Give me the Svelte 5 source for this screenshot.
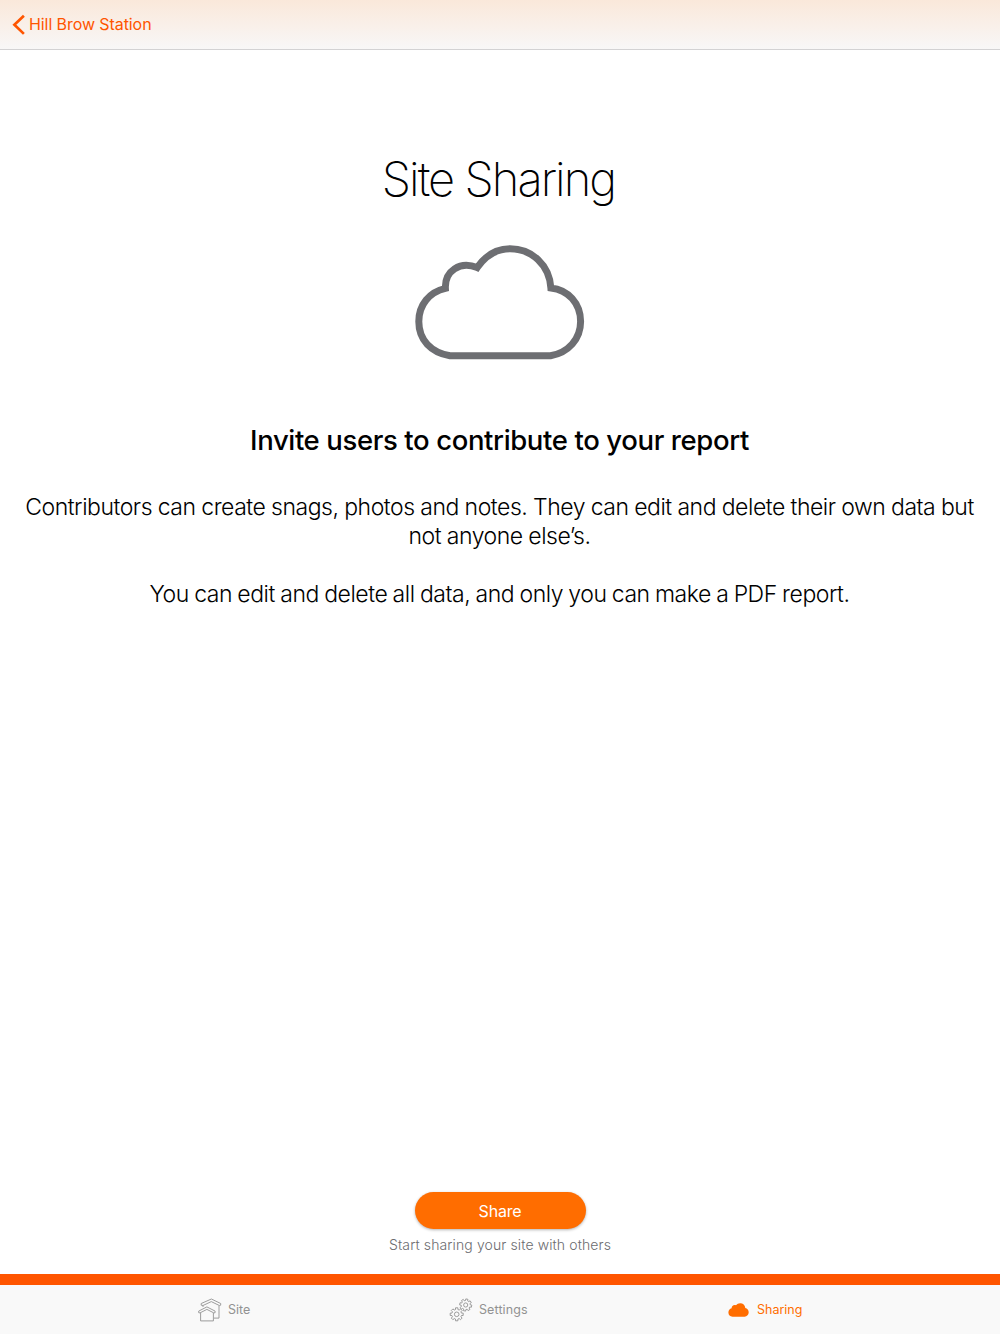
<script>
  const copy = [
    ['Contributors can create snags, photos and notes. They can edit and delete their own data but', 'not anyone else’s.'],
    ['You can edit and delete all data, and only you can make a PDF report.']
  ]

  // outline of a gear with eight square teeth
  function gear(cx, cy, outer, inner, turn = 0) {
    const points = []
    for (let i = 0; i < 8; i++) {
      const a = i * Math.PI / 4 + turn
      for (const [r, offset] of [[inner, -0.25], [outer, -0.18], [outer, 0.18], [inner, 0.25]]) {
        points.push(`${(cx + r * Math.cos(a + offset)).toFixed(2)} ${(cy + r * Math.sin(a + offset)).toFixed(2)}`)
      }
    }
    return `M${points.join('L')}Z`
  }
</script>


<div class="screen">
  <header>
    <button class="back">
      <svg width="14" height="22" viewBox="0 0 14 22"><path d="M12.900 1.800 3.400 10.800l9.500 9.100" /></svg>
      <span>Hill Brow Station</span>
    </button>
  </header>

  <main>
    <h1>Site Sharing</h1>

    <svg class="cloud" width="200" height="140" viewBox="0 0 200 140">
      <path d="M50 125.8C31 122.5 18.8 110 18.8 91.5C18.8 74.5 29.5 62 45.4 58.3C44.6 41 60 30.5 77.2 37.600C85.500 25.500 96 18.800 110 18.800C132 18.800 149.300 35 150.900 57.900C168 59.500 180.600 73.500 180.600 91.500C180.600 109 168.500 122.500 150.500 125.800Z" />
    </svg>

    <h2>Invite users to contribute to your report</h2>

    <div class="copy">
      {#each copy as lines}
        <p>
          {#each lines as line}<span>{line}</span>{/each}
        </p>
      {/each}
    </div>
  </main>

  <section class="action">
    <button class="share"><span>Share</span></button>
    <small>Start sharing your site with others</small>
  </section>

  <nav>
    <button class="site">
      <svg width="24" height="26" viewBox="0 0 24 26">
        <path d="M5 10V8.600M3.200 8.200V6.500L13.400 2l9.300 4.500v1.700l-1.400.3-8-3.900-8.300 3.900-1.800-.3M21 8.700v12.400h-5" />
        <path d="M.7 15.700v-1.600l8.200-4.200 8.200 4.200v1.600l-1.300.2-6.900-3.500L2 15.900zM2.600 16v7.900h12.800V16" />
      </svg>
      <span>Site</span>
    </button>
    <button class="settings">
      <svg width="24" height="26" viewBox="0 0 24 26">
        <path d={gear(7.7, 17.3, 6.6, 4.9)} />
        <circle cx="7.7" cy="17.3" r="2.3" />
        <path d={gear(16.7, 8, 6.1, 4.5, 0.2)} />
        <circle cx="16.7" cy="8" r="2.1" />
      </svg>
      <span>Settings</span>
    </button>
    <button class="sharing">
      <svg width="21" height="14" viewBox="0 0 21 14">
        <path d="M4.500 13.700C2 13.500.4 12 .4 9.500c0-2.100 1.300-3.700 3.200-4.200C3.600 2.800 5.600 1.400 8 2.200 9 .9 10.400.2 12.200.2c2.800 0 4.800 1.900 5.100 4.800 2 .5 3.400 2.200 3.400 4.300 0 2.500-1.700 4.200-4.100 4.400z" />
      </svg>
      <span>Sharing</span>
    </button>
  </nav>
</div>


<style>

  :global(body) {
    margin: 0;
  }

  .screen {
    display: flex;
    flex-direction: column;
    height: 1334px;
    overflow: hidden;
    background: #fff;
    color: #000;
    font-family: Inter, "Liberation Sans", sans-serif;
  }

  button {
    display: flex;
    align-items: center;
    margin: 0;
    padding: 0;
    border: 0;
    background: none;
    color: inherit;
    font: inherit;
  }

  svg {
    display: block;
    flex: none;
    fill: none;
    stroke: currentColor;
  }

  span, h1, h2, small {
    white-space: nowrap;
  }

  header {
    display: flex;
    box-sizing: border-box;
    height: 50px;
    padding-left: 11px;
    border-bottom: 1px solid #d3d2d3;
    background: linear-gradient(#fae8da, #f8f7f7);
  }

  .back {
    gap: 4px;
    color: #ff5500;
    font-size: 16px;
    letter-spacing: -0.08px;
  }

  .back svg {
    stroke-width: 2.7;
  }

  .back span {
    padding-bottom: 1px;
  }

  main {
    display: flex;
    flex: 1;
    flex-direction: column;
    align-items: center;
    padding-top: 99px;
  }

  h1 {
    margin: 0;
    padding-right: 3px;
    font-size: 47px;
    font-weight: 200;
    line-height: 60px;
    letter-spacing: -1.95px;
  }

  .cloud {
    margin-top: 21px;
    color: #6d6e72;
    stroke-width: 7;
  }

  h2 {
    margin: 50px 0 0;
    padding-right: 1px;
    font-size: 27.5px;
    font-weight: 500;
    line-height: 41px;
    letter-spacing: -0.38px;
  }

  .copy {
    margin-top: 32px;
    padding-right: 1px;
    font-size: 23px;
    font-weight: 300;
    line-height: 29px;
    text-align: center;
  }

  p {
    margin: 0 0 29px;
    letter-spacing: -0.47px;
    word-spacing: -0.3px;
  }

  p:last-child {
    word-spacing: -0.65px;
  }

  p span {
    display: block;
  }

  .action {
    display: flex;
    flex-direction: column;
    align-items: center;
    height: 82px;
  }

  .share {
    justify-content: center;
    width: 171px;
    height: 37px;
    border-radius: 19px;
    background: #ff6d00;
    box-shadow: 0 1px 3px rgba(0, 0, 0, 0.3);
    color: #fff;
    font-size: 16px;
    letter-spacing: -0.2px;
  }

  small {
    margin-top: 6px;
    color: #6c6c6f;
    font-size: 14px;
    font-weight: 300;
    line-height: 20px;
    letter-spacing: 0.11px;
  }

  nav {
    display: flex;
    box-sizing: border-box;
    height: 60px;
    padding-left: 198px;
    border-top: 11px solid #ff5500;
    background: #f9f9f9;
    color: #929292;
    font-size: 12.5px;
  }

  nav svg {
    stroke-width: 0.9;
  }

  nav .site {
    width: 251px;
    gap: 6px;
  }

  nav .settings {
    width: 279px;
    gap: 6px;
    letter-spacing: 0.1px;
  }

  nav .sharing {
    gap: 8px;
    color: #ff6d00;
  }

  nav .sharing svg {
    fill: currentColor;
    stroke: none;
  }

</style>
